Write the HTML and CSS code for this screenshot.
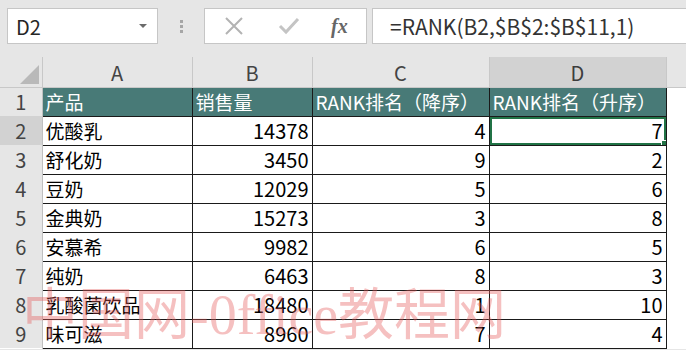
FILE: index.html
```html
<!DOCTYPE html>
<html lang="zh-CN">
<head>
    <meta charset="UTF-8">
    <title>RANK</title>
    <link rel="stylesheet" href="styles.css">
</head>
<body>
    <div class="bar">
        <div class="namebox">
            <span>D2</span>
            <span class="caret"></span>
        </div>
        <div class="grip"><i></i><i></i><i></i></div>
        <div class="fxbox">
            <svg width="22" height="22" viewBox="0 0 22 22"><path d="M3 3 L19 19 M19 3 L3 19" stroke="#b3b3b3" stroke-width="2" fill="none"/></svg>
            <svg width="24" height="22" viewBox="0 0 24 22"><path d="M3 11 L9 17 L21 4" stroke="#c4c4c4" stroke-width="3" fill="none"/></svg>
            <span class="fx">fx</span>
        </div>
        <div class="formula">=RANK(B2,$B$2:$B$11,1)</div>
    </div>

    <div class="wrap">
        <table class="sheet">
            <colgroup>
                <col class="c-row"><col class="c-a"><col class="c-b"><col class="c-c"><col class="c-d"><col>
            </colgroup>
            <tr class="cols">
                <th class="corner"><span class="tri"></span></th>
                <th>A</th><th>B</th><th>C</th><th class="sel">D</th><th class="empty"></th>
            </tr>
            <tr class="head">
                <th class="rh">1</th>
                <td>产品</td><td>销售量</td><td>RANK排名（降序）</td><td>RANK排名（升序）</td><td class="blank"></td>
            </tr>
            <tr>
                <th class="rh sel">2</th>
                <td>优酸乳</td><td class="num">14378</td><td class="num">4</td><td class="num active">7</td><td class="blank"></td>
            </tr>
            <tr>
                <th class="rh">3</th>
                <td>舒化奶</td><td class="num">3450</td><td class="num">9</td><td class="num">2</td><td class="blank"></td>
            </tr>
            <tr>
                <th class="rh">4</th>
                <td>豆奶</td><td class="num">12029</td><td class="num">5</td><td class="num">6</td><td class="blank"></td>
            </tr>
            <tr>
                <th class="rh">5</th>
                <td>金典奶</td><td class="num">15273</td><td class="num">3</td><td class="num">8</td><td class="blank"></td>
            </tr>
            <tr>
                <th class="rh">6</th>
                <td>安慕希</td><td class="num">9982</td><td class="num">6</td><td class="num">5</td><td class="blank"></td>
            </tr>
            <tr>
                <th class="rh">7</th>
                <td>纯奶</td><td class="num">6463</td><td class="num">8</td><td class="num">3</td><td class="blank"></td>
            </tr>
            <tr>
                <th class="rh">8</th>
                <td>乳酸菌饮品</td><td class="num">18480</td><td class="num">1</td><td class="num">10</td><td class="blank"></td>
            </tr>
            <tr>
                <th class="rh">9</th>
                <td>味可滋</td><td class="num">8960</td><td class="num">7</td><td class="num">4</td><td class="blank"></td>
            </tr>
        </table>
        <div class="watermark">中国网-0ffice教程网</div>
    </div>
</body>
</html>
```

FILE: styles.css
```css
* {
    margin: 0;
    padding: 0;
    box-sizing: border-box;
}

body {
    background-color: #e6e6e6;
    font-family: "Noto Sans CJK SC", "Noto Sans", sans-serif;
    width: 686px;
    height: 350px;
    overflow: hidden;
}

/* formula bar */
.bar {
    display: flex;
    align-items: center;
    height: 57px;
    padding: 0 0 5px 7px;
}

.namebox {
    width: 151px;
    height: 36px;
    background-color: #ffffff;
    border: 1px solid #c6c6c6;
    display: flex;
    align-items: center;
    justify-content: space-between;
    padding: 0 10px 0 8px;
    font-size: 20px;
    color: #262626;
}

.caret {
    width: 0;
    height: 0;
    border-left: 4px solid transparent;
    border-right: 4px solid transparent;
    border-top: 4px solid #6b6b6b;
}

.grip {
    width: 46px;
    display: flex;
    flex-direction: column;
    align-items: center;
    gap: 2px;
}

.grip i {
    width: 3px;
    height: 3px;
    background-color: #a6a6a6;
}

.fxbox {
    width: 163px;
    height: 36px;
    background-color: #ffffff;
    border: 1px solid #c6c6c6;
    display: flex;
    align-items: center;
    padding-left: 18px;
    gap: 32px;
}

.fx {
    font-family: "Liberation Serif", serif;
    font-style: italic;
    font-weight: bold;
    font-size: 20px;
    color: #666666;
    margin-left: -2px;
}

.formula {
    flex: 1;
    height: 36px;
    margin-left: 5px;
    background-color: #ffffff;
    border: 1px solid #c6c6c6;
    border-right: none;
    display: flex;
    align-items: center;
    padding-left: 17px;
    font-size: 21px;
    color: #333333;
}

/* grid */
.wrap {
    position: relative;
}

.sheet {
    width: 686px;
    table-layout: fixed;
    border-collapse: collapse;
    background-color: #ffffff;
}

.c-row { width: 42px; }
.c-a { width: 150px; }
.c-b { width: 120px; }
.c-c { width: 177px; }
.c-d { width: 177px; }

.cols th {
    height: 30px;
    line-height: 26px;
    background-color: #e6e6e6;
    border-right: 1px solid #c8c8c8;
    border-bottom: 1px solid #c8c8c8;
    font-weight: normal;
    font-size: 20px;
    color: #444444;
    padding-top: 2px;
}

.cols th.sel {
    background-color: #d2d2d2;
    color: #3d3d3d;
}

.cols th.empty {
    border-right: none;
}

.corner {
    position: relative;
}

.tri {
    position: absolute;
    right: 3px;
    bottom: 3px;
    width: 0;
    height: 0;
    border-left: 19px solid transparent;
    border-bottom: 19px solid #b9b9b9;
}

.rh,
td {
    height: 29px;
    line-height: 26px;
    font-size: 20px;
}

.rh {
    background-color: #e6e6e6;
    border-right: 1px solid #c0c0c0;
    font-weight: normal;
    color: #444444;
    text-align: center;
}

.rh.sel {
    background-color: #d2d2d2;
}

td {
    border: 1px solid #1a1a1a;
    font-size: 19px;
    color: #000000;
    padding: 0 3px;
    white-space: nowrap;
    overflow: hidden;
}

td.num {
    text-align: right;
    font-size: 20px;
}

td.blank {
    border: none;
    border-left: 1px solid #1a1a1a;
}

.head td {
    background-color: #487a77;
    color: #ffffff;
}

.head td.blank {
    background-color: #ffffff;
}

.active {
    position: relative;
    box-shadow: inset 0 0 0 2px #217346;
}

.active::after {
    content: "";
    position: absolute;
    right: -4px;
    bottom: -4px;
    width: 7px;
    height: 7px;
    background-color: #217346;
    border: 1px solid #ffffff;
}

.watermark {
    position: absolute;
    left: 22px;
    top: 228px;
    font-family: "Liberation Serif", serif;
    font-size: 56px;
    line-height: 60px;
    color: rgba(230, 90, 90, 0.38);
    white-space: nowrap;
    pointer-events: none;
}
```
